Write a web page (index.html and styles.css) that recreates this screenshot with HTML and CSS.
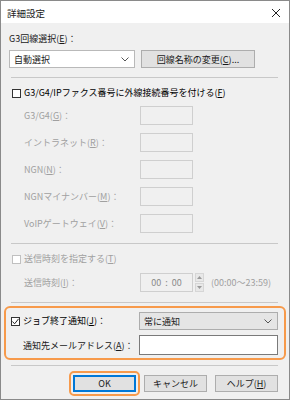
FILE: index.html
```html
<!DOCTYPE html>
<html lang="ja">
<head>
  <meta charset="UTF-8">
  <title>詳細設定</title>
  <link rel="stylesheet" href="styles.css">
</head>
<body>
  <div class="dialog">
    <div class="titlebar">
      <span class="title">詳細設定</span>
      <svg class="close" width="10" height="10" viewBox="0 0 10 10"><path d="M1 1L9 9M9 1L1 9" stroke="#222" stroke-width="1"/></svg>
    </div>

    <div class="content">
      <div class="caption">G3回線選択(<u>E</u>)：</div>
      <div class="line-row">
        <div class="combo white">
          <span>自動選択</span>
          <svg class="chev" width="8" height="5" viewBox="0 0 8 5"><path d="M0.5 0.5L4 4L7.5 0.5" fill="none" stroke="#555" stroke-width="1"/></svg>
        </div>
        <button class="btn name-btn">回線名称の変更(<u>C</u>)...</button>
      </div>

      <div class="sep first"></div>

      <div class="check strong"><span class="box"></span>G3/G4/IPファクス番号に外線接続番号を付ける(<u>F</u>)</div>
      <div class="fields">
        <div class="field"><span class="flabel">G3/G4(<u>G</u>)：</span><span class="input off"></span></div>
        <div class="field"><span class="flabel">イントラネット(<u>R</u>)：</span><span class="input off"></span></div>
        <div class="field"><span class="flabel">NGN(<u>N</u>)：</span><span class="input off"></span></div>
        <div class="field"><span class="flabel">NGNマイナンバー(<u>M</u>)：</span><span class="input off"></span></div>
        <div class="field"><span class="flabel">VoIPゲートウェイ(<u>V</u>)：</span><span class="input off"></span></div>
      </div>

      <div class="sep"></div>

      <div class="check off-text"><span class="box off"></span>送信時刻を指定する(<u>T</u>)</div>
      <div class="field time-row">
        <span class="flabel">送信時刻(<u>I</u>)：</span>
        <span class="input off time">00 &nbsp;:&nbsp; 00</span>
        <span class="spin">
          <span class="half"><svg width="5" height="3" viewBox="0 0 5 3"><path d="M0 3L2.5 0L5 3Z" fill="#999"/></svg></span>
          <span class="half"><svg width="5" height="3" viewBox="0 0 5 3"><path d="M0 0L2.5 3L5 0Z" fill="#999"/></svg></span>
        </span>
        <span class="range">(00:00〜23:59)</span>
      </div>

      <div class="sep"></div>

      <div class="notify">
        <div class="field notify-row">
          <span class="check"><span class="box checked"><svg width="9" height="9" viewBox="0 0 9 9"><path d="M1.5 4.5L3.6 6.8L7.6 1.8" fill="none" stroke="#222" stroke-width="1"/></svg></span>ジョブ終了通知(<u>J</u>)：</span>
          <div class="combo gray">
            <span>常に通知</span>
            <svg class="chev" width="8" height="5" viewBox="0 0 8 5"><path d="M0.5 0.5L4 4L7.5 0.5" fill="none" stroke="#555" stroke-width="1"/></svg>
          </div>
        </div>
        <div class="field notify-row">
          <span class="flabel dark">通知先メールアドレス(<u>A</u>)：</span>
          <span class="input mail"></span>
        </div>
      </div>

      <div class="sep last"></div>

      <div class="buttons">
        <span class="focus-ring"><button class="btn act default">OK</button></span>
        <button class="btn act">キャンセル</button>
        <button class="btn act">ヘルプ(<u>H</u>)</button>
      </div>
    </div>
  </div>
</body>
</html>
```
FILE: styles.css
```css
body {
  margin: 0;
  font-family: "Noto Sans CJK JP", "Noto Sans", sans-serif;
  font-size: 9px;
  color: #1a1a1a;
}
u {
  text-decoration: underline;
  text-underline-offset: 1px;
}
.dialog {
  width: 290px;
  height: 400px;
  box-sizing: border-box;
  border: 1px solid #8a8a8a;
  background: #f0f0f0;
}
.titlebar {
  height: 22px;
  background: #fff;
  display: flex;
  align-items: center;
  justify-content: space-between;
  padding: 0 8px 0 6px;
}
.title {
  font-size: 9.5px;
  margin-top: 2px;
}
.close {
  margin-top: 1px;
}
.content {
  padding: 10px 11px 0 8px;
}
.caption {
  height: 12px;
  line-height: 12px;
  margin-bottom: 5px;
}
.line-row {
  display: flex;
  align-items: center;
}
.combo {
  box-sizing: border-box;
  height: 18px;
  display: flex;
  align-items: center;
  justify-content: space-between;
  padding: 0 5px 0 4px;
  border: 1px solid #adadad;
}
.combo.white {
  width: 126px;
  background: #fff;
  border-color: #b9b9b9;
}
.combo.gray {
  width: 139px;
  background: #e5e5e5;
}
.btn {
  font-family: inherit;
  font-size: 9px;
  font-weight: 400;
  color: #1a1a1a;
  background: #e1e1e1;
  border: 1px solid #adadad;
  padding: 0;
  box-sizing: border-box;
}
.name-btn {
  width: 114px;
  height: 18px;
  margin-left: 6px;
}
.sep {
  height: 1px;
  background: #c8c8c8;
  margin: 10px 0 9px 2px;
}
.sep.first {
  margin-top: 9px;
}
.check {
  display: flex;
  align-items: center;
  height: 12px;
  line-height: 12px;
  margin-left: 3px;
}
.check.strong {
  color: #000;
}
.box {
  width: 9px;
  height: 9px;
  box-sizing: border-box;
  border: 1px solid #333;
  background: #fff;
  margin-right: 3px;
  display: flex;
  align-items: center;
  justify-content: center;
  flex: none;
}
.box.off {
  border-color: #c0c0c0;
}
.box svg {
  flex: none;
}
.off-text {
  color: #a0a0a0;
}
.fields {
  margin-top: 7px;
  display: flex;
  flex-direction: column;
  gap: 8px;
}
.field {
  display: flex;
  align-items: center;
}
.flabel {
  width: 116px;
  padding-left: 15px;
  color: #a0a0a0;
  flex: none;
}
.flabel.dark {
  color: #1a1a1a;
}
.input {
  box-sizing: border-box;
  height: 19px;
  width: 53px;
  border: 1px solid #cfcfcf;
  background: #f0f0f0;
}
.time-row {
  margin-top: 8px;
}
.time {
  display: flex;
  align-items: center;
  justify-content: center;
  color: #8a8a8a;
}
.spin {
  display: flex;
  flex-direction: column;
  margin-left: 2px;
  width: 9px;
  height: 19px;
  gap: 1px;
}
.half {
  flex: 1;
  background: #e8e8e8;
  border: 1px solid #d6d6d6;
  display: flex;
  align-items: center;
  justify-content: center;
}
.range {
  margin-left: 7px;
  color: #a0a0a0;
}
.notify {
  margin: -6px -8px 0 -5px;
  border: 2px solid #f79a4b;
  border-radius: 6px;
  padding: 4px 6px 3px 0;
  display: flex;
  flex-direction: column;
  gap: 5px;
}
.notify-row .check {
  width: 128px;
  margin-left: 5px;
  color: #000;
  flex: none;
}
.notify-row .flabel {
  width: 116px;
  padding-left: 17px;
}
.input.mail {
  width: 139px;
  height: 20px;
  background: #fff;
  border-color: #7a7a7a;
}
.sep.last {
  margin: 5px 0 0 2px;
}
.buttons {
  display: flex;
  align-items: center;
  justify-content: flex-end;
  gap: 8px;
  margin-top: 5px;
}
.focus-ring {
  border: 2px solid #f79a4b;
  border-radius: 5px;
  padding: 2px;
  display: flex;
  margin-right: -4px;
}
.act {
  width: 63px;
  height: 17px;
}
.default {
  border: 1px solid #0078d7;
  box-shadow: inset 0 0 0 1px #0078d7;
}
```
